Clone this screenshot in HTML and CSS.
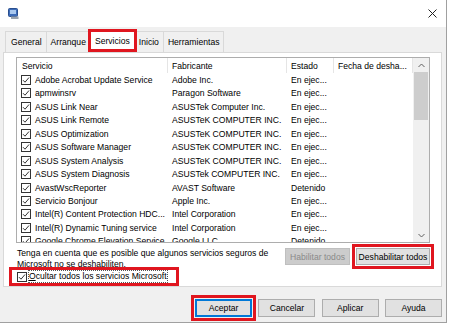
FILE: index.html
```html
<!DOCTYPE html>
<html lang="es">
<head>
<meta charset="utf-8">
<title>Configuración del sistema</title>
<link rel="stylesheet" href="styles.css">
</head>
<body>
<div class="window">
  <div class="titlebar">
    <svg class="appicon" width="11" height="11" viewBox="0 0 11 11">
      <rect x="0.5" y="0.5" width="9" height="8" rx="1" fill="#3d6cb8" stroke="#2a4f8f"/>
      <rect x="2" y="2" width="6" height="4" fill="#a9c8ef"/>
      <rect x="3" y="8.5" width="7.5" height="2.5" fill="#9aa3ad"/>
    </svg>
    <svg class="close" width="9" height="9" viewBox="0 0 9 9">
      <path d="M0.5 0.5 L8.5 8.5 M8.5 0.5 L0.5 8.5" stroke="#222" stroke-width="1" fill="none"/>
    </svg>
  </div>
  <div class="body">
    <div class="tabs">
      <div class="tab first">General</div>
      <div class="tab">Arranque</div>
      <div class="tab sel">Servicios</div>
      <div class="tab after">Inicio</div>
      <div class="tab">Herramientas</div>
    </div>
    <div class="panel">
      <div class="list">
        <div class="cols">
          <div class="row head">
            <div class="cell c1">Servicio</div>
            <div class="cell">Fabricante</div>
            <div class="cell">Estado</div>
            <div class="cell">Fecha de desha...</div>
          </div>
          <div class="row"><div class="cell c1"><svg class="cb" viewBox="0 0 10 10"><rect x="0.5" y="0.5" width="9" height="9" fill="#fff" stroke="#333"/><path d="M2 5.2 L4 7.2 L8 2.5" stroke="#333" fill="none"/></svg>Adobe Acrobat Update Service</div><div class="cell">Adobe Inc.</div><div class="cell">En ejec...</div><div class="cell"></div></div>
          <div class="row"><div class="cell c1"><svg class="cb" viewBox="0 0 10 10"><rect x="0.5" y="0.5" width="9" height="9" fill="#fff" stroke="#333"/><path d="M2 5.2 L4 7.2 L8 2.5" stroke="#333" fill="none"/></svg>apmwinsrv</div><div class="cell">Paragon Software</div><div class="cell">En ejec...</div><div class="cell"></div></div>
          <div class="row"><div class="cell c1"><svg class="cb" viewBox="0 0 10 10"><rect x="0.5" y="0.5" width="9" height="9" fill="#fff" stroke="#333"/><path d="M2 5.2 L4 7.2 L8 2.5" stroke="#333" fill="none"/></svg>ASUS Link Near</div><div class="cell">ASUSTek Computer Inc.</div><div class="cell">En ejec...</div><div class="cell"></div></div>
          <div class="row"><div class="cell c1"><svg class="cb" viewBox="0 0 10 10"><rect x="0.5" y="0.5" width="9" height="9" fill="#fff" stroke="#333"/><path d="M2 5.2 L4 7.2 L8 2.5" stroke="#333" fill="none"/></svg>ASUS Link Remote</div><div class="cell">ASUSTeK COMPUTER INC.</div><div class="cell">En ejec...</div><div class="cell"></div></div>
          <div class="row"><div class="cell c1"><svg class="cb" viewBox="0 0 10 10"><rect x="0.5" y="0.5" width="9" height="9" fill="#fff" stroke="#333"/><path d="M2 5.2 L4 7.2 L8 2.5" stroke="#333" fill="none"/></svg>ASUS Optimization</div><div class="cell">ASUSTeK COMPUTER INC.</div><div class="cell">En ejec...</div><div class="cell"></div></div>
          <div class="row"><div class="cell c1"><svg class="cb" viewBox="0 0 10 10"><rect x="0.5" y="0.5" width="9" height="9" fill="#fff" stroke="#333"/><path d="M2 5.2 L4 7.2 L8 2.5" stroke="#333" fill="none"/></svg>ASUS Software Manager</div><div class="cell">ASUSTeK COMPUTER INC.</div><div class="cell">En ejec...</div><div class="cell"></div></div>
          <div class="row"><div class="cell c1"><svg class="cb" viewBox="0 0 10 10"><rect x="0.5" y="0.5" width="9" height="9" fill="#fff" stroke="#333"/><path d="M2 5.2 L4 7.2 L8 2.5" stroke="#333" fill="none"/></svg>ASUS System Analysis</div><div class="cell">ASUSTeK COMPUTER INC.</div><div class="cell">En ejec...</div><div class="cell"></div></div>
          <div class="row"><div class="cell c1"><svg class="cb" viewBox="0 0 10 10"><rect x="0.5" y="0.5" width="9" height="9" fill="#fff" stroke="#333"/><path d="M2 5.2 L4 7.2 L8 2.5" stroke="#333" fill="none"/></svg>ASUS System Diagnosis</div><div class="cell">ASUSTek COMPUTER INC.</div><div class="cell">En ejec...</div><div class="cell"></div></div>
          <div class="row"><div class="cell c1"><svg class="cb" viewBox="0 0 10 10"><rect x="0.5" y="0.5" width="9" height="9" fill="#fff" stroke="#333"/><path d="M2 5.2 L4 7.2 L8 2.5" stroke="#333" fill="none"/></svg>AvastWscReporter</div><div class="cell">AVAST Software</div><div class="cell">Detenido</div><div class="cell"></div></div>
          <div class="row"><div class="cell c1"><svg class="cb" viewBox="0 0 10 10"><rect x="0.5" y="0.5" width="9" height="9" fill="#fff" stroke="#333"/><path d="M2 5.2 L4 7.2 L8 2.5" stroke="#333" fill="none"/></svg>Servicio Bonjour</div><div class="cell">Apple Inc.</div><div class="cell">En ejec...</div><div class="cell"></div></div>
          <div class="row"><div class="cell c1"><svg class="cb" viewBox="0 0 10 10"><rect x="0.5" y="0.5" width="9" height="9" fill="#fff" stroke="#333"/><path d="M2 5.2 L4 7.2 L8 2.5" stroke="#333" fill="none"/></svg>Intel(R) Content Protection HDC...</div><div class="cell">Intel Corporation</div><div class="cell">En ejec...</div><div class="cell"></div></div>
          <div class="row"><div class="cell c1"><svg class="cb" viewBox="0 0 10 10"><rect x="0.5" y="0.5" width="9" height="9" fill="#fff" stroke="#333"/><path d="M2 5.2 L4 7.2 L8 2.5" stroke="#333" fill="none"/></svg>Intel(R) Dynamic Tuning service</div><div class="cell">Intel Corporation</div><div class="cell">En ejec...</div><div class="cell"></div></div>
          <div class="row"><div class="cell c1"><svg class="cb" viewBox="0 0 10 10"><rect x="0.5" y="0.5" width="9" height="9" fill="#fff" stroke="#333"/><path d="M2 5.2 L4 7.2 L8 2.5" stroke="#333" fill="none"/></svg>Google Chrome Elevation Service</div><div class="cell">Google LLC</div><div class="cell">Detenido</div><div class="cell"></div></div>
        </div>
        <div class="scrollbar">
          <div class="arrow">
            <svg width="7" height="5" viewBox="0 0 7 5"><path d="M0.5 4 L3.5 1 L6.5 4" stroke="#606060" fill="none"/></svg>
          </div>
          <div class="thumb"></div>
          <div class="track"></div>
          <div class="arrow">
            <svg width="7" height="5" viewBox="0 0 7 5"><path d="M0.5 1 L3.5 4 L6.5 1" stroke="#606060" fill="none"/></svg>
          </div>
        </div>
      </div>
      <div class="below">
        <p class="note">Tenga en cuenta que es posible que algunos servicios seguros de Microsoft no se deshabiliten.</p>
        <div class="actions">
          <button class="btn wide" disabled>Habilitar todos</button>
          <button class="btn wide2 marked">Deshabilitar todos</button>
        </div>
      </div>
      <div class="hidebox">
        <svg class="cb" viewBox="0 0 10 10"><rect x="0.5" y="0.5" width="9" height="9" fill="#fff" stroke="#333"/><path d="M2 5.2 L4 7.2 L8 2.5" stroke="#333" fill="none"/></svg><span class="focus"><u>O</u>cultar todos los servicios Microsoft</span>
      </div>
    </div>
    <div class="footer">
      <button class="btn dlg default marked">Aceptar</button>
      <button class="btn dlg">Cancelar</button>
      <button class="btn dlg">Aplicar</button>
      <button class="btn dlg">Ayuda</button>
    </div>
  </div>
</div>
</body>
</html>
```

FILE: styles.css
```css
* { box-sizing: border-box; }

body {
  margin: 0;
  background: #ffffff;
  font-family: "Liberation Sans", Arial, sans-serif;
  font-size: 8.6px;
  color: #000;
}

.window {
  width: 447px;
  height: 323px;
  border-right: 1px solid #a0a0a0;
  border-bottom: 1px solid #a0a0a0;
  display: flex;
  flex-direction: column;
}

.titlebar {
  height: 27px;
  flex: none;
  background: #ffffff;
  display: flex;
  align-items: center;
  justify-content: space-between;
  padding: 0 9px 0 8px;
}

.body {
  flex: 1;
  background: #f0f0f0;
  padding: 2px 4px 0 3px;
  display: flex;
  flex-direction: column;
}

/* tabs */
.tabs {
  display: flex;
  height: 23px;
  flex: none;
  position: relative;
  z-index: 1;
}

.tab {
  margin-top: 2px;
  height: 21px;
  padding: 0 4px;
  border: 1px solid #d9d9d9;
  border-bottom: none;
  background: #f0f0f0;
  display: flex;
  align-items: center;
  white-space: nowrap;
}

.tab.first { margin-left: 2px; padding-left: 5px; }
.tab + .tab { border-left: none; }

.tab.sel {
  margin-top: 0;
  height: 23px;
  margin-left: -3px;
  border: 3px solid #e0161f;
  background: #ffffff;
  position: relative;
  z-index: 2;
}

.tab.after { margin-left: -3px; border-left: 1px solid #d9d9d9; }

/* panel */
.panel {
  height: 235px;
  flex: none;
  background: #ffffff;
  border: 1px solid #d9d9d9;
  padding: 4px 11px 0 12px;
  display: flex;
  flex-direction: column;
}

.list {
  height: 186px;
  flex: none;
  border: 1px solid #adadad;
  background: #ffffff;
  display: flex;
  overflow: hidden;
}

.cols {
  width: 396px;
  flex: none;
  overflow: hidden;
}

.row {
  display: grid;
  grid-template-columns: 151px 119px 47px 79px;
  height: 13.45px;
  align-items: center;
}

.row.head {
  height: 15.3px;
  align-items: stretch;
}

.row.head .cell {
  border-right: 1px solid #e5e5e5;
  display: flex;
  align-items: center;
  padding-left: 4px;
}

.row.head .cell.c1 { padding-left: 5px; }

.cell {
  white-space: nowrap;
  overflow: hidden;
  padding-left: 4px;
}

.cell.c1 {
  display: flex;
  align-items: center;
  gap: 4px;
}

.cb {
  width: 10px;
  height: 10px;
  flex: none;
  display: block;
}

.scrollbar {
  width: 16px;
  flex: none;
  background: #f0f0f0;
  display: flex;
  flex-direction: column;
  padding: 0 1px;
}

.arrow {
  height: 14px;
  flex: none;
  display: flex;
  align-items: center;
  justify-content: center;
}

.thumb {
  height: 48px;
  flex: none;
  background: #cdcdcd;
}

.track { flex: 1; }

/* below the list */
.below {
  display: flex;
  justify-content: space-between;
  margin-top: 5px;
}

.note {
  margin: 0;
  padding-left: 1px;
  width: 262px;
  line-height: 11px;
}

.actions {
  display: flex;
  gap: 6px;
  align-items: flex-start;
}

.btn {
  font: inherit;
  color: #000;
  height: 17px;
  padding: 0;
  background: #e1e1e1;
  border: 1px solid #adadad;
  white-space: nowrap;
}

.btn.wide { width: 65px; }
.btn.wide2 { width: 74px; }

.btn:disabled {
  background: #cccccc;
  border-color: #bfbfbf;
  color: #8a8a8a;
}

.marked {
  outline: 3px solid #e0161f;
  outline-offset: 1px;
}

.hidebox {
  margin: -3px 0 0 -7px;
  width: 170px;
  height: 20px;
  border: 3px solid #e0161f;
  display: flex;
  align-items: center;
  gap: 2px;
  padding-left: 5px;
}

.focus {
  outline: 1px dotted #555;
  line-height: 11px;
  white-space: nowrap;
}

/* footer */
.footer {
  flex: 1;
  display: flex;
  justify-content: flex-end;
  align-items: flex-start;
  gap: 6.3px;
  padding-top: 12px;
  padding-right: 0;
}

.btn.dlg {
  width: 57px;
  height: 18px;
}

.btn.default {
  border: 2px solid #0078d7;
}
```
